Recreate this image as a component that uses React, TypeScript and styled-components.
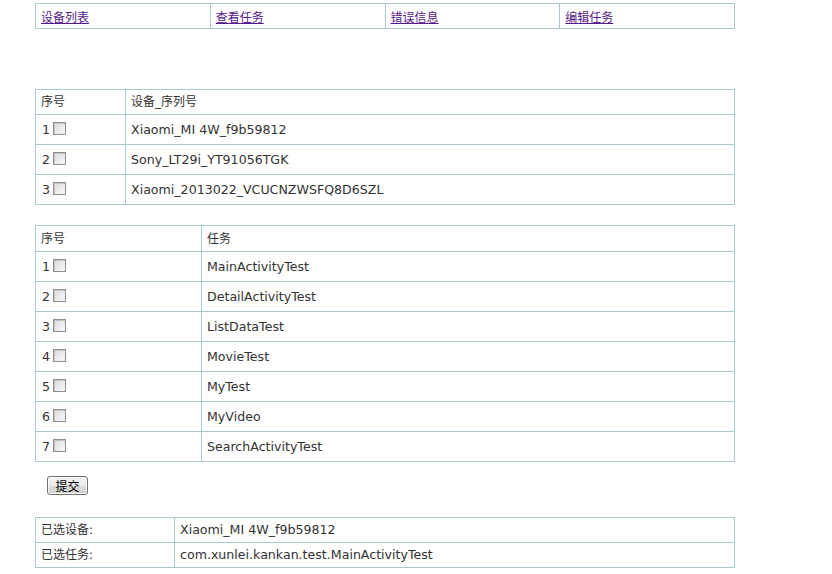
import React from 'react';
import styled, { createGlobalStyle } from 'styled-components';

const GlobalStyle = createGlobalStyle`
  body {
    margin: 0;
    padding: 3px 0 0 35px;
    background: #fff;
    font-family: "DejaVu Sans", Verdana, "Noto Sans CJK SC", sans-serif;
    font-size: 12.6px;
    color: #333;
  }
`

const Grid = styled.table<{ $mt?: number }>`
    width: 700px;
    border-collapse: collapse;
    margin-top: ${p => p.$mt || 0}px;
    table-layout: fixed;
`
const Cell = styled.td<{ $w?: number; $h?: number; $pt?: number }>`
    border: 1px solid #a8c9cd;
    padding: ${p => p.$pt || 0}px 0 0 5px;
    height: ${p => (p.$h || 25) - 1 - (p.$pt || 0)}px;
    width: ${p => (p.$w ? p.$w + 'px' : 'auto')};
    vertical-align: middle;
    white-space: nowrap;
    line-height: 14px;
`
const NavLink = styled.a`
    font-size: 12px;
    color: #551a8b;
    text-decoration: underline;
    cursor: pointer;
`
const Label = styled.span`
    font-size: 12px;
`
const Check = styled.input.attrs({ type: 'checkbox' })`
    appearance: none;
    width: 13px;
    height: 13px;
    margin: 0 0 0 3px;
    vertical-align: -1px;
    border: 1px solid #8f8f8f;
    background: linear-gradient(135deg, #dcdcdc, #f7f7f7);
    box-shadow: inset 1px 1px 0 #c4c4c4;
`
const Num = styled.span`
    display: inline-block;
    margin-left: 1px;
`
const ButtonRow = styled.div`
    padding: 14px 0 0 12px;
`
const Submit = styled.button`
    width: 41px;
    height: 19px;
    padding: 0;
    font-family: "Noto Sans CJK SC", sans-serif;
    font-size: 12px;
    line-height: 16px;
    color: #000;
    border: 1px solid #707070;
    border-radius: 3px;
    background: linear-gradient(#f2f2f2 0%, #ebebeb 50%, #dddddd 51%, #cfcfcf 100%);
    box-shadow: inset 0 0 0 1px #fcfcfc;
`

const devices = ['Xiaomi_MI 4W_f9b59812', 'Sony_LT29i_YT91056TGK', 'Xiaomi_2013022_VCUCNZWSFQ8D6SZL']
const tasks = ['MainActivityTest', 'DetailActivityTest', 'ListDataTest', 'MovieTest', 'MyTest', 'MyVideo', 'SearchActivityTest']

const App = () => {
    return (
        <>
            <GlobalStyle />
            <Grid>
                <tbody>
                    <tr>
                        {['设备列表', '查看任务', '错误信息', '编辑任务'].map(t => (
                            <Cell key={t} $h={25} $pt={3}><NavLink>{t}</NavLink></Cell>
                        ))}
                    </tr>
                </tbody>
            </Grid>

            <Grid $mt={60}>
                <tbody>
                    <tr>
                        <Cell $w={84} $h={25}><Label>序号</Label></Cell>
                        <Cell $h={25}><Label>设备_序列号</Label></Cell>
                    </tr>
                    {devices.map((d, i) => (
                        <tr key={d}>
                            <Cell $h={30}><Num>{i + 1}</Num><Check /></Cell>
                            <Cell $h={30}>{d}</Cell>
                        </tr>
                    ))}
                </tbody>
            </Grid>

            <Grid $mt={20}>
                <tbody>
                    <tr>
                        <Cell $w={160} $h={26}><Label>序号</Label></Cell>
                        <Cell $h={26}><Label>任务</Label></Cell>
                    </tr>
                    {tasks.map((t, i) => (
                        <tr key={t}>
                            <Cell $h={30}><Num>{i + 1}</Num><Check /></Cell>
                            <Cell $h={30}>{t}</Cell>
                        </tr>
                    ))}
                </tbody>
            </Grid>

            <ButtonRow><Submit>提交</Submit></ButtonRow>

            <Grid $mt={22}>
                <tbody>
                    <tr>
                        <Cell $w={133}><Label>已选设备:</Label></Cell>
                        <Cell>Xiaomi_MI 4W_f9b59812</Cell>
                    </tr>
                    <tr>
                        <Cell><Label>已选任务:</Label></Cell>
                        <Cell>com.xunlei.kankan.test.MainActivityTest</Cell>
                    </tr>
                </tbody>
            </Grid>
        </>
    )
}

export default App;
